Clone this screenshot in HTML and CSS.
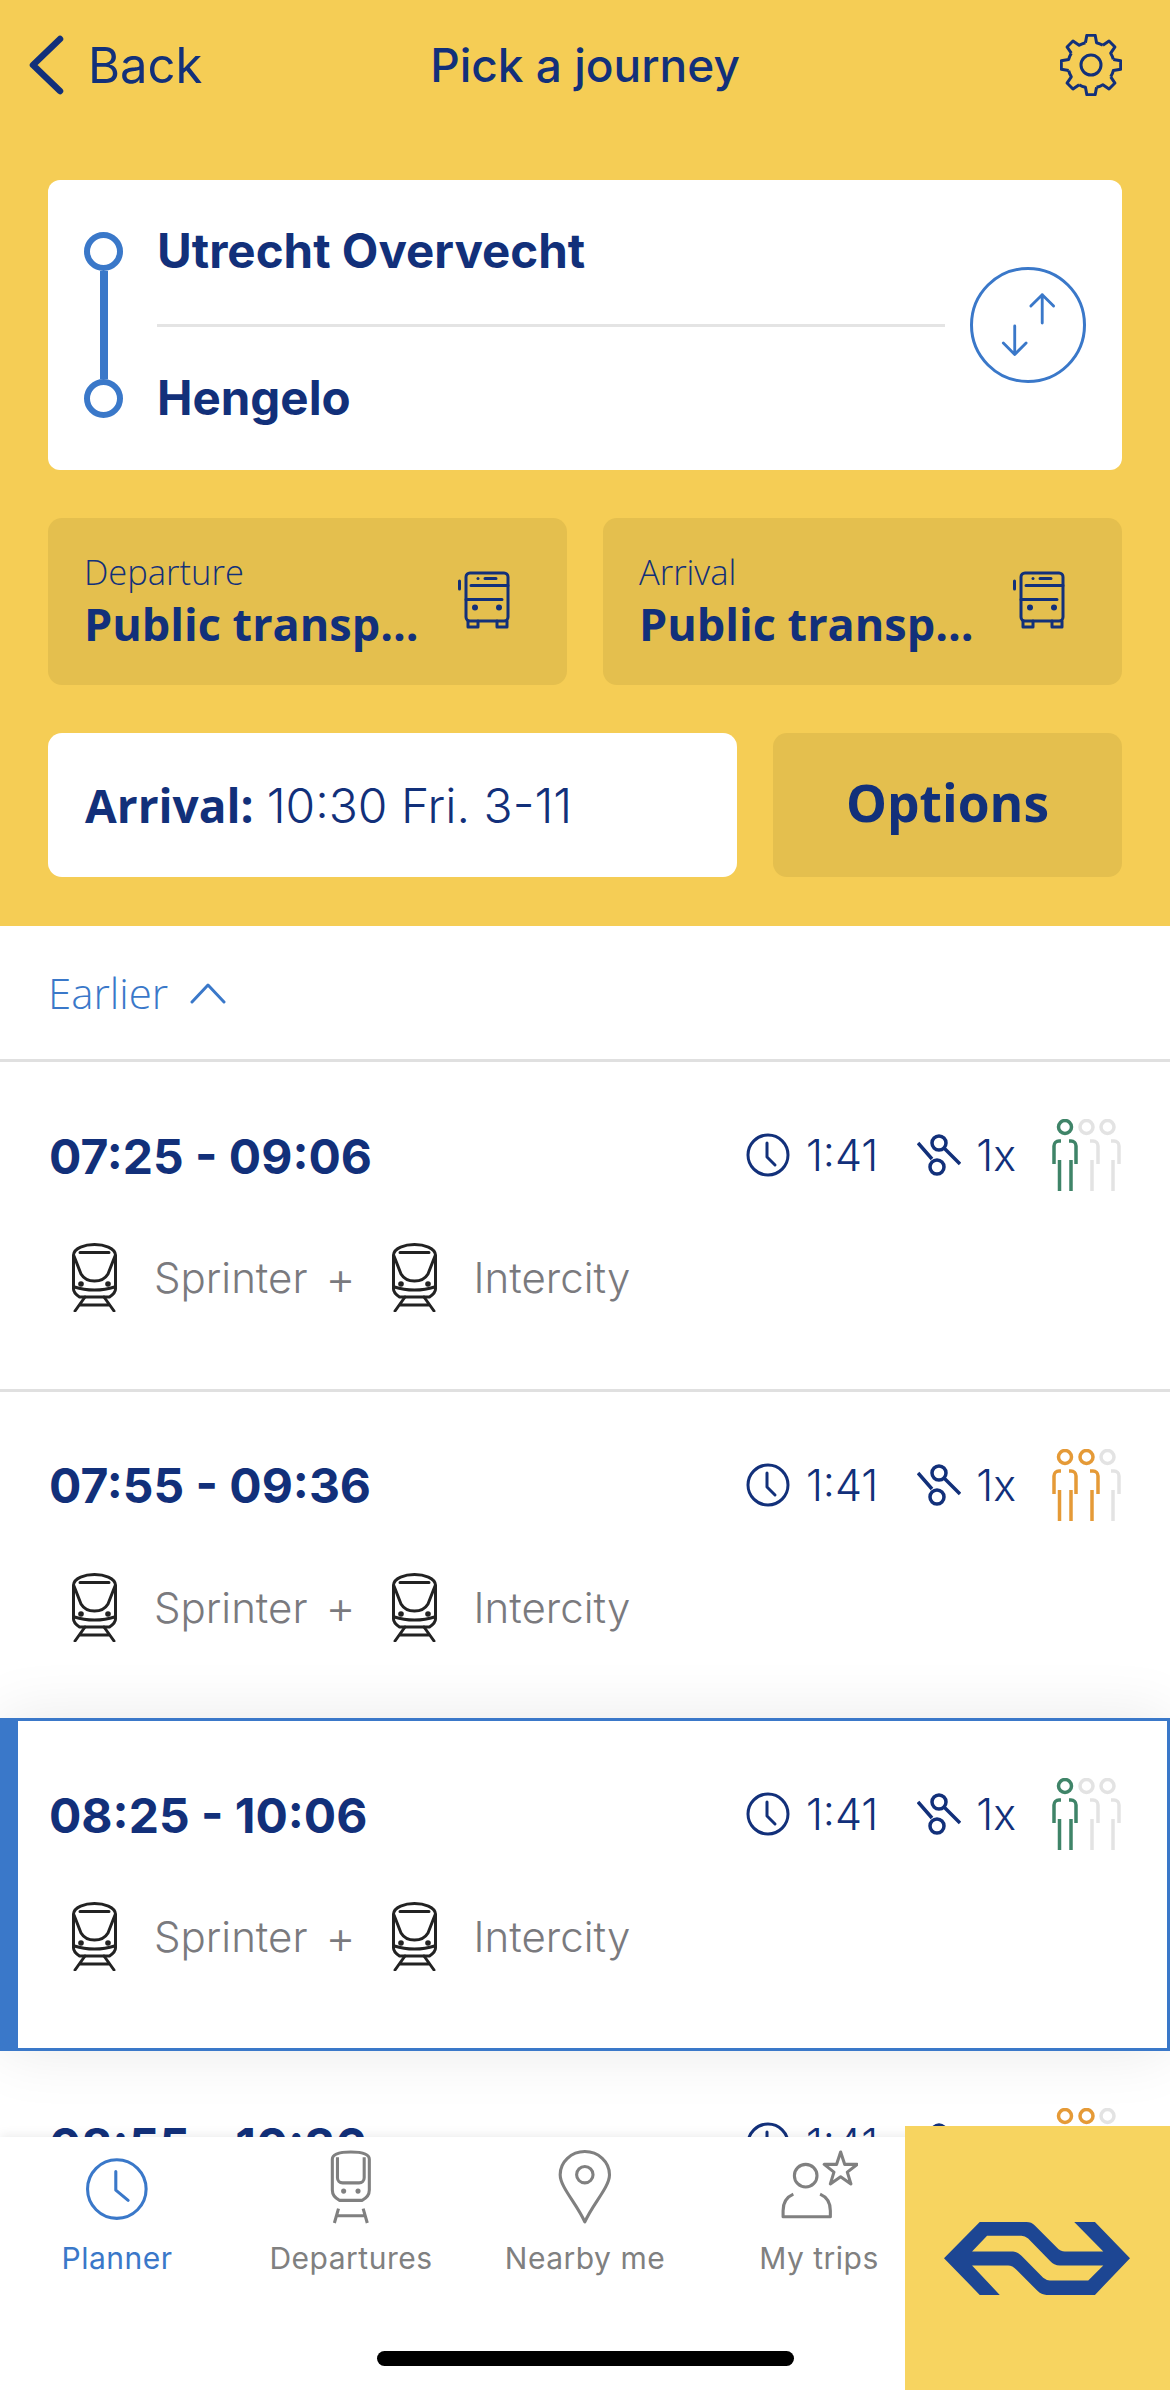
FILE: index.html
```html
<!DOCTYPE html>
<html lang="en">
<head>
    <meta charset="UTF-8">
    <meta name="viewport" content="width=device-width, initial-scale=1.0">
    <title>Pick a journey</title>
    <link rel="stylesheet" href="styles.css">
</head>
<body>
    <!-- shared icons -->
    <svg class="icon-defs" width="0" height="0">
        <symbol id="icon-bus" viewBox="0 0 52 58">
            <g fill="none" stroke="currentColor" stroke-width="3" stroke-linecap="round" stroke-linejoin="round">
                <rect x="8" y="2" width="42" height="48" rx="4"/>
                <path d="M1.500 10v8M13 14.500h37M8 28.500h36M27 7.500h11M10 50v6h10v-6M39 50v6h10v-6"/>
            </g>
            <circle cx="20" cy="7.500" r="1.500" fill="currentColor"/>
            <circle cx="17" cy="36.500" r="3" fill="currentColor"/>
            <circle cx="41" cy="36.500" r="3" fill="currentColor"/>
        </symbol>
        <symbol id="icon-train" viewBox="0 0 45 69">
            <g fill="none" stroke="#222" stroke-width="3" stroke-linecap="round" stroke-linejoin="round">
                <path d="M1.500 12C2 5 13 1.500 22.500 1.500S43 5 43.500 12V46c0 3-3 6-6 8H7.500c-3-2-6-5-6-8z"/>
                <path d="M2 13l7 18c3 5 9 7 13.500 7S33 36 36 31l7-18M8 9.500h29M2.500 44c12 4 28 4 40 0"/>
                <path d="M13 54L3 68M32 54l10 14M9 62h27"/>
            </g>
            <circle cx="9" cy="41" r="2.800" fill="#222"/>
            <circle cx="36" cy="41" r="2.800" fill="#222"/>
        </symbol>
        <symbol id="icon-clock" viewBox="0 0 44 44">
            <circle cx="22" cy="22" r="20" fill="none" stroke="#12307a" stroke-width="3"/>
            <path d="M21 10v14l8 8" fill="none" stroke="#12307a" stroke-width="3" stroke-linecap="round" stroke-linejoin="round"/>
        </symbol>
        <symbol id="icon-transfer" viewBox="0 0 44 42">
            <g fill="none" stroke="#12307a" stroke-width="3.500">
                <circle cx="22" cy="9" r="7"/>
                <circle cx="20" cy="33" r="7"/>
                <path d="M1 9l14 16M27 14l16 16"/>
            </g>
        </symbol>
        <symbol id="person-left" viewBox="0 0 70 72">
            <g fill="none" stroke="currentColor" stroke-width="3.500">
                <circle cx="13" cy="8" r="6.500"/>
                <path d="M2 45V27a5 5 0 0 1 5-5h2M24 45V27a5 5 0 0 0-5-5h-2M7.500 41v31M19 41v31"/>
            </g>
        </symbol>
        <symbol id="person-mid" viewBox="0 0 70 72">
            <g fill="none" stroke="currentColor" stroke-width="3.500">
                <circle cx="34.500" cy="8" r="6.500"/>
                <path d="M38 22h3a5 5 0 0 1 5 5v18M40 41v31"/>
            </g>
        </symbol>
        <symbol id="person-right" viewBox="0 0 70 72">
            <g fill="none" stroke="currentColor" stroke-width="3.500">
                <circle cx="55.500" cy="8" r="6.500"/>
                <path d="M59 22h3a5 5 0 0 1 5 5v18M61 41v31"/>
            </g>
        </symbol>
    </svg>

    <div class="app">
        <div class="main">
            <header class="header">
                <div class="topbar">
                    <a class="back">
                        <svg class="back-icon" viewBox="0 0 36 60"><path d="M32 4L5 30l27 26" fill="none" stroke="#12307a" stroke-width="6.500" stroke-linecap="round" stroke-linejoin="round"/></svg>
                        <span>Back</span>
                    </a>
                    <div class="title">Pick a journey</div>
                    <div class="settings">
                        <svg class="gear" viewBox="-1 -1 62 62">
                            <g fill="none" stroke="#12307a" stroke-width="3" stroke-linejoin="round">
                                <path id="gear-tooth" d="M24.440 7.680L25.820 .3H34.180L35.560 7.680A23 23 0 0 1 41.850 10.280"/>
                                <use href="#gear-tooth" transform="rotate(45 30 30)"/>
                                <use href="#gear-tooth" transform="rotate(90 30 30)"/>
                                <use href="#gear-tooth" transform="rotate(135 30 30)"/>
                                <use href="#gear-tooth" transform="rotate(180 30 30)"/>
                                <use href="#gear-tooth" transform="rotate(225 30 30)"/>
                                <use href="#gear-tooth" transform="rotate(270 30 30)"/>
                                <use href="#gear-tooth" transform="rotate(315 30 30)"/>
                                <circle cx="30" cy="30" r="10"/>
                            </g>
                        </svg>
                    </div>
                </div>

                <div class="route-card">
                    <div class="route-line">
                        <span class="route-dot"></span>
                        <span class="route-bar"></span>
                        <span class="route-dot"></span>
                    </div>
                    <div class="route-stops">
                        <div class="route-stop">Utrecht Overvecht</div>
                        <div class="route-divider"></div>
                        <div class="route-stop">Hengelo</div>
                    </div>
                    <div class="swap">
                        <svg class="swap-icon" viewBox="0 0 116 116">
                            <g fill="none" stroke="#3a78c9" stroke-width="3" stroke-linecap="round" stroke-linejoin="round">
                                <path d="M73 26v30M61 38l12-12 12 12"/>
                                <path d="M44 59v30M32 77l12 12 12-12"/>
                            </g>
                        </svg>
                    </div>
                </div>

                <div class="modes">
                    <div class="mode">
                        <div class="mode-text">
                            <div class="mode-label">Departure</div>
                            <div class="mode-value">Public transp...</div>
                        </div>
                        <svg class="bus"><use href="#icon-bus"/></svg>
                    </div>
                    <div class="mode">
                        <div class="mode-text">
                            <div class="mode-label">Arrival</div>
                            <div class="mode-value">Public transp...</div>
                        </div>
                        <svg class="bus"><use href="#icon-bus"/></svg>
                    </div>
                </div>

                <div class="when-row">
                    <div class="when"><b>Arrival:</b> <span>10:30 Fri. 3-11</span></div>
                    <div class="options">Options</div>
                </div>
            </header>

            <div class="earlier">
                <span>Earlier</span>
                <svg class="earlier-icon" viewBox="0 0 36 22"><path d="M2 20L18 3l16 17" fill="none" stroke="#3a78c9" stroke-width="3" stroke-linecap="round" stroke-linejoin="round"/></svg>
            </div>

            <div class="journey">
                <div class="journey-top">
                    <div class="journey-time">07:25 - 09:06</div>
                    <svg class="clock"><use href="#icon-clock"/></svg>
                    <span class="duration">1:41</span>
                    <svg class="transfer"><use href="#icon-transfer"/></svg>
                    <span class="transfers">1x</span>
                    <svg class="crowd">
                        <use href="#person-right" class="grey"/>
                        <use href="#person-mid" class="grey"/>
                        <use href="#person-left" class="green"/>
                    </svg>
                </div>
                <div class="journey-trains">
                    <svg class="train"><use href="#icon-train"/></svg>
                    <span class="train-name">Sprinter</span>
                    <span class="plus">+</span>
                    <svg class="train"><use href="#icon-train"/></svg>
                    <span class="train-name">Intercity</span>
                </div>
            </div>

            <div class="journey">
                <div class="journey-top">
                    <div class="journey-time">07:55 - 09:36</div>
                    <svg class="clock"><use href="#icon-clock"/></svg>
                    <span class="duration">1:41</span>
                    <svg class="transfer"><use href="#icon-transfer"/></svg>
                    <span class="transfers">1x</span>
                    <svg class="crowd">
                        <use href="#person-right" class="grey"/>
                        <use href="#person-mid" class="orange"/>
                        <use href="#person-left" class="orange"/>
                    </svg>
                </div>
                <div class="journey-trains">
                    <svg class="train"><use href="#icon-train"/></svg>
                    <span class="train-name">Sprinter</span>
                    <span class="plus">+</span>
                    <svg class="train"><use href="#icon-train"/></svg>
                    <span class="train-name">Intercity</span>
                </div>
            </div>

            <div class="journey selected">
                <div class="journey-top">
                    <div class="journey-time">08:25 - 10:06</div>
                    <svg class="clock"><use href="#icon-clock"/></svg>
                    <span class="duration">1:41</span>
                    <svg class="transfer"><use href="#icon-transfer"/></svg>
                    <span class="transfers">1x</span>
                    <svg class="crowd">
                        <use href="#person-right" class="grey"/>
                        <use href="#person-mid" class="grey"/>
                        <use href="#person-left" class="green"/>
                    </svg>
                </div>
                <div class="journey-trains">
                    <svg class="train"><use href="#icon-train"/></svg>
                    <span class="train-name">Sprinter</span>
                    <span class="plus">+</span>
                    <svg class="train"><use href="#icon-train"/></svg>
                    <span class="train-name">Intercity</span>
                </div>
            </div>

            <div class="journey no-border">
                <div class="journey-top">
                    <div class="journey-time">08:55 - 10:36</div>
                    <svg class="clock"><use href="#icon-clock"/></svg>
                    <span class="duration">1:41</span>
                    <svg class="transfer"><use href="#icon-transfer"/></svg>
                    <span class="transfers">1x</span>
                    <svg class="crowd">
                        <use href="#person-right" class="grey"/>
                        <use href="#person-mid" class="orange"/>
                        <use href="#person-left" class="orange"/>
                    </svg>
                </div>
            </div>
        </div>

        <nav class="tabbar">
            <div class="tab active">
                <svg class="tab-icon" viewBox="0 0 60 72">
                    <circle cx="30" cy="38" r="28.500" fill="none" stroke="#3a78c9" stroke-width="3"/>
                    <path d="M29 21v18l12 10" fill="none" stroke="#3a78c9" stroke-width="3" stroke-linecap="round" stroke-linejoin="round"/>
                </svg>
                <span>Planner</span>
            </div>
            <div class="tab">
                <svg class="tab-icon" viewBox="0 0 60 72">
                    <g fill="none" stroke="#808080" stroke-width="3" stroke-linejoin="round">
                        <path d="M12 9c0-5 8-7 18-7s18 2 18 7v30c0 5-3 8-7 10H19c-4-2-7-5-7-10z"/>
                        <path d="M17 7v20c0 3 2 5 5 5h16c3 0 5-2 5-5V7"/>
                        <path d="M18 57l-4 14M42 57l4 14M16 64h28"/>
                    </g>
                    <circle cx="23" cy="40" r="2.500" fill="#808080"/>
                    <circle cx="37" cy="40" r="2.500" fill="#808080"/>
                </svg>
                <span>Departures</span>
            </div>
            <div class="tab">
                <svg class="tab-icon" viewBox="0 0 60 72">
                    <path d="M30 70C22 52 6 36 6 24a24 22.500 0 0 1 48 0c0 12-16 28-24 46z" fill="none" stroke="#808080" stroke-width="3" stroke-linejoin="round"/>
                    <circle cx="30" cy="24" r="8" fill="none" stroke="#808080" stroke-width="3"/>
                </svg>
                <span>Nearby me</span>
            </div>
            <div class="tab">
                <svg class="tab-icon" viewBox="0 0 76 72">
                    <g fill="none" stroke="#808080" stroke-width="3" stroke-linejoin="round">
                        <circle cx="25" cy="25" r="11"/>
                        <path d="M13 43c-7 3-10 9-10 16v6h46v-6c0-7-3-13-10-16"/>
                        <path d="M59 2l4 12h12l-9.500 7.500 3.500 11.500-10-7-10 7 3.500-11.500L43 14h12z"/>
                    </g>
                </svg>
                <span>My trips</span>
            </div>
        </nav>

        <div class="home-bar"></div>

        <div class="logo-block">
            <svg class="ns-logo" viewBox="133 367 557 218">
                <path fill="#1d4693" fill-rule="evenodd" d="M133 475L240 367H380Q395 367 405 377L470 442Q482 455 495 455H610L523 367H585L690 475L585 585H440Q425 585 412 572L350 510Q338 497 325 497H217L300 585H240ZM217 455L262 408H365Q375 408 385 416L450 483Q462 497 480 497H610L565 542H450Q440 542 430 534L365 468Q352 455 340 455Z"/>
            </svg>
        </div>
    </div>
</body>
</html>
```

FILE: styles.css
```css
* {
    box-sizing: border-box;
}

html, body {
    margin: 0;
    height: 100%;
}

body {
    background: #fff;
    color: #12307a;
    font-family: "Inter", "Liberation Sans", sans-serif;
}

.icon-defs {
    position: absolute;
}

.app {
    position: relative;
    display: flex;
    flex-direction: column;
    width: 1170px;
    height: 2390px;
    overflow: hidden;
}

.main {
    flex: 1;
    min-height: 0;
    overflow: hidden;
}

/* header */
.header {
    height: 926px;
    padding: 0 48px;
    background: #f5cd55;
}

.topbar {
    display: grid;
    grid-template-columns: 1fr auto 1fr;
    align-items: center;
    height: 130px;
    margin-left: -20px;
}

.back {
    display: flex;
    align-items: center;
    gap: 24px;
    font-size: 49px;
}

.back-icon {
    width: 36px;
    height: 60px;
}

.title {
    font-size: 46px;
    font-weight: 500;
    margin-left: 20px;
}

.settings {
    display: flex;
    justify-content: flex-end;
}

.gear {
    width: 62px;
    height: 62px;
}

/* route card */
.route-card {
    display: flex;
    height: 290px;
    margin-top: 50px;
    background: #fff;
    border-radius: 12px;
}

.route-line {
    display: flex;
    flex-direction: column;
    align-items: center;
    width: 39px;
    margin-left: 36px;
    padding-top: 52px;
}

.route-dot {
    flex: none;
    width: 39px;
    height: 39px;
    border: 6px solid #3a78c9;
    border-radius: 50%;
}

.route-bar {
    flex: none;
    width: 8px;
    height: 108px;
    background: #3a78c9;
}

.route-stops {
    width: 788px;
    margin-left: 34px;
}

.route-stop {
    display: flex;
    align-items: center;
    height: 144px;
    padding-bottom: 3px;
    font-size: 47.5px;
    font-weight: 700;
}

.route-divider {
    height: 3px;
    background: #e4e4e4;
}

.swap {
    flex: none;
    align-self: center;
    width: 116px;
    height: 116px;
    margin-left: 25px;
    border: 3px solid #3a78c9;
    border-radius: 50%;
}

.swap-icon {
    display: block;
    width: 110px;
    height: 110px;
}

/* public transport pills */
.modes {
    display: flex;
    gap: 36px;
    margin-top: 48px;
}

.mode {
    display: flex;
    flex: 1;
    align-items: center;
    justify-content: space-between;
    height: 167px;
    padding: 0 57px 0 36px;
    background: #e4bf4e;
    border-radius: 14px;
}

.mode-label {
    font-family: "Open Sans", sans-serif;
    font-size: 34.500px;
    font-weight: 300;
    line-height: 44px;
}

.mode-value {
    font-family: "Open Sans", sans-serif;
    font-size: 45px;
    font-weight: 700;
    line-height: 60px;
}

.bus {
    width: 52px;
    height: 58px;
    margin-bottom: 4px;
}

.when-row {
    display: flex;
    gap: 36px;
    margin-top: 48px;
}

.when {
    display: flex;
    flex: none;
    align-items: center;
    gap: 13px;
    width: 689px;
    height: 144px;
    padding-left: 37px;
    background: #fff;
    border-radius: 14px;
    font-size: 48px;
    font-weight: 300;
}

.when b {
    font-family: "Open Sans", sans-serif;
    font-size: 46px;
    font-weight: 700;
}

.options {
    display: flex;
    flex: 1;
    align-items: center;
    justify-content: center;
    padding-bottom: 6px;
    background: #e4bf4e;
    border-radius: 14px;
    font-family: "Open Sans", sans-serif;
    font-size: 51.500px;
    font-weight: 700;
}

/* earlier */
.earlier {
    display: flex;
    align-items: center;
    gap: 22px;
    height: 133px;
    padding-left: 48px;
    color: #3a78c9;
    font-family: "Open Sans", sans-serif;
    font-size: 42px;
    font-weight: 300;
}

.earlier-icon {
    width: 36px;
    height: 22px;
}

/* journeys */
.journey {
    height: 329.5px;
    padding: 57px 48px 0 49px;
    border-top: 3px solid #e0e0e0;
    background: #fff;
}

.journey.selected {
    position: relative;
    height: 333px;
    padding-left: 31px;
    padding-right: 45px;
    border: 3px solid #3a78c9;
    border-left-width: 18px;
    box-shadow: 0 0 60px rgba(0, 0, 0, 0.09);
}

.journey.no-border {
    padding-top: 57px;
    border-top: 0;
}

.journey-top {
    display: flex;
    align-items: center;
    height: 72px;
}

.journey-time {
    flex: 1;
    padding-top: 2px;
    font-size: 48px;
    font-weight: 700;
}

.clock {
    width: 44px;
    height: 44px;
}

.duration {
    margin-left: 16px;
    font-size: 43px;
    font-weight: 300;
}

.transfer {
    width: 44px;
    height: 42px;
    margin-left: 39px;
}

.transfers {
    margin-left: 15px;
    font-size: 43px;
    font-weight: 300;
}

.crowd {
    width: 70px;
    height: 72px;
    margin-left: 36px;
}

.green {
    color: #3f8468;
}

.orange {
    color: #e59a37;
}

.grey {
    color: #e3e3e3;
}

.journey-trains {
    display: flex;
    align-items: center;
    height: 69px;
    margin-top: 52px;
    padding-left: 23px;
    color: #7a7a7e;
    font-size: 42px;
    font-weight: 300;
}

.train {
    width: 45px;
    height: 69px;
}

.train-name {
    margin-left: 37px;
}

.plus {
    margin: 0 36px 0 18px;
    font-size: 46px;
}

/* bottom bar */
.tabbar {
    position: relative;
    display: grid;
    flex: none;
    grid-template-columns: repeat(4, 234px);
    height: 253px;
    padding-top: 13px;
    background: #fff;
    box-shadow: 0 -2px 10px rgba(0, 0, 0, 0.08);
}

.tab {
    display: flex;
    flex-direction: column;
    align-items: center;
    color: #808080;
    font-size: 30px;
    letter-spacing: 0.5px;
}

.tab.active {
    color: #3a78c9;
}

.tab-icon {
    height: 74px;
    margin-bottom: 16px;
}

.home-bar {
    position: absolute;
    left: 377px;
    bottom: 24px;
    width: 417px;
    height: 15px;
    background: #000;
    border-radius: 8px;
}

.logo-block {
    position: absolute;
    right: 0;
    bottom: 0;
    display: flex;
    justify-content: center;
    width: 265px;
    height: 264px;
    padding: 96px 40px 0 39px;
    background: #f7d460;
}

.ns-logo {
    width: 186px;
    height: 73px;
}
```
